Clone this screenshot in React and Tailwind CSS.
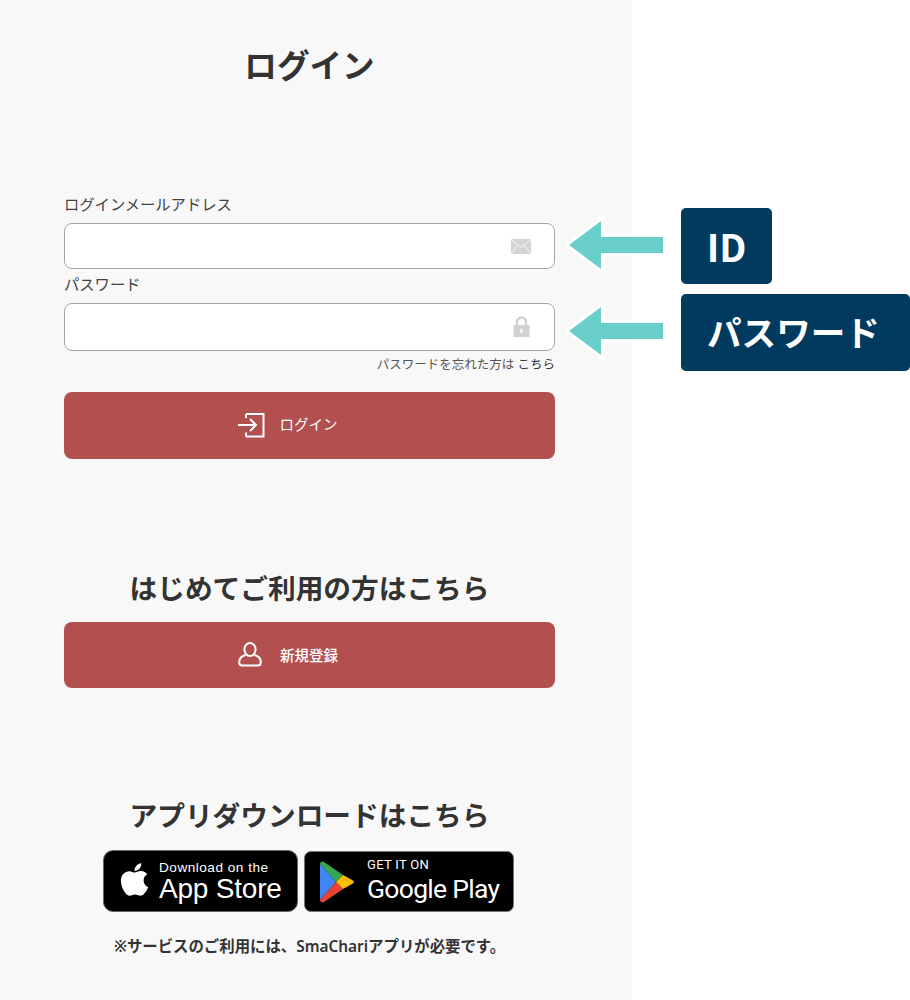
import React from "react";
import { FaApple } from "react-icons/fa";

const jp = "[font-family:'Noto_Sans','Noto_Sans_CJK_JP',sans-serif]";

function Arrow({ className }) {
  return (
    <svg className={className} width="104" height="58" viewBox="0 0 104 58">
      <path d="M5 29 L37 5 L37 21 L99 21 L99 37 L37 37 L37 53 Z" fill="#fff" stroke="#fff" strokeWidth="6" strokeLinejoin="miter" />
      <path d="M5 29 L37 5 L37 21 L99 21 L99 37 L37 37 L37 53 Z" fill="#69cfcb" />
    </svg>
  );
}

function MailIcon() {
  return (
    <svg width="20" height="15" viewBox="0 0 20 15" className="absolute right-[23px] top-[15px]">
      <rect width="20" height="15" fill="#d4d4d4" />
      <path d="M0 0.5 L10 8.5 L20 0.5 M0 14.5 L7 6.5 M20 14.5 L13 6.5" fill="none" stroke="#f4f4f4" strokeWidth="1" />
    </svg>
  );
}

function LockIcon() {
  return (
    <svg width="17" height="21" viewBox="0 0 17 21" className="absolute right-[24px] top-[12px]">
      <path d="M4 10 V6 a4.5 4.5 0 0 1 9 0 V10" fill="none" stroke="#d2d2d2" strokeWidth="2.4" />
      <rect x="0.5" y="9" width="16" height="12" fill="#d2d2d2" />
      <rect x="7.5" y="13" width="2" height="4" fill="#fff" />
    </svg>
  );
}

function LoginIcon() {
  return (
    <svg width="28" height="26" viewBox="0 0 28 26" fill="none" stroke="#fff" strokeWidth="2">
      <path d="M9 2 H26.5 V24.5 H9 M9 24.5 V20.5 M9 2 V6" />
      <path d="M1 13 H19 M13 7 L19 13 L13 19" />
    </svg>
  );
}

function UserIcon() {
  return (
    <svg width="24" height="25" viewBox="0 0 24 25" fill="none" stroke="#fff" strokeWidth="2">
      <ellipse cx="12" cy="7.5" rx="5.6" ry="6.5" />
      <path d="M7.5 13 C3.5 14 1.3 17 1.2 20 C1.2 22.5 2.2 23.5 4 23.5 H20 C21.8 23.5 22.8 22.5 22.8 20 C22.7 17 20.5 14 16.5 13" />
    </svg>
  );
}

function PlayIcon() {
  return (
    <svg width="36" height="42" viewBox="0 0 36 42">
      <path d="M1 3 C1 1 3 0 5 1 L24 14 L17 21 Z" fill="#34a853" />
      <path d="M1 3 L17 21 L1 39 Z" fill="#4285f4" />
      <path d="M1 39 L17 21 L24 28 L5 41 C3 42 1 41 1 39 Z" fill="#ea4335" />
      <path d="M24 14 L33 19 C35.5 20.5 35.5 21.5 33 23 L24 28 L17 21 Z" fill="#fbbc04" />
    </svg>
  );
}

function RedButton({ className, children }) {
  return (
    <div className={`flex items-center justify-center w-full rounded-[8px] bg-[#b25050] text-white ${className}`}>
      {children}
    </div>
  );
}

export default function App() {
  return (
    <div className={`relative w-[910px] h-[1000px] bg-white overflow-hidden text-[#333] ${jp}`}>
      <main className="w-[632px] h-[1000px] bg-[#f8f8f8] px-[64px] pr-[77px] flex flex-col">
        <h1 className="mt-[43px] h-[46px] leading-[46px] text-center text-[32.6px] font-bold">ログイン</h1>

        <label className="mt-[105px] h-[20px] leading-[20px] text-[15.3px] text-[#444]">ログインメールアドレス</label>
        <div className="relative mt-[9px] h-[46px] rounded-[8px] border border-[#a5a5a5] bg-white"><MailIcon /></div>
        <label className="mt-[5px] h-[20px] leading-[20px] text-[15.3px] text-[#444]">パスワード</label>
        <div className="relative mt-[9px] h-[48px] rounded-[8px] border border-[#a5a5a5] bg-white"><LockIcon /></div>
        <p className="mt-[5px] h-[18px] leading-[18px] text-right text-[12.5px] text-[#555]">パスワードを忘れた方は <span className="text-[#333]">こちら</span></p>

        <RedButton className="mt-[18px] h-[67px] gap-[15px] pr-[43px] pb-[2px]">
          <LoginIcon />
          <span className="text-[14.5px] w-[60px]">ログイン</span>
        </RedButton>

        <h2 className="mt-[107px] h-[44px] leading-[44px] text-center text-[27.7px] font-bold">はじめてご利用の方はこちら</h2>
        <RedButton className="mt-[12px] h-[66px] gap-[18px] pr-[41px] pb-[2px]">
          <UserIcon />
          <span className="text-[14.5px] font-medium w-[60px] mt-[4px]">新規登録</span>
        </RedButton>

        <h2 className="mt-[105px] h-[44px] leading-[44px] text-center text-[27.7px] font-bold">アプリダウンロードはこちら</h2>

        <div className="mt-[13px] ml-[39px] flex items-start gap-[6px]">
          <div className="relative w-[195px] h-[62px] rounded-[10px] bg-black border border-[#666] flex items-center pl-[12px] gap-[6px] text-white overflow-hidden font-['Liberation_Sans',sans-serif]">
            <FaApple className="text-[37px] mb-[3px] shrink-0" />
            <div className="flex flex-col">
              <span className="text-[13.6px] leading-[14px] tracking-[0.5px]">Download on the</span>
              <span className="text-[28px] leading-[27px] tracking-[-0.2px]">App Store</span>
            </div>
          </div>
          <div className="relative mt-[1px] w-[210px] h-[61px] rounded-[7px] bg-black border border-[#777] flex items-center pl-[14px] gap-[12px] text-white overflow-hidden font-['Roboto',sans-serif]">
            <PlayIcon />
            <div className="flex flex-col -mt-[1px]">
              <span className="text-[13px] leading-[14px] tracking-[0.3px]">GET IT ON</span>
              <span className="text-[26.5px] leading-[33px] tracking-[-0.7px]">Google Play</span>
            </div>
          </div>
        </div>

        <p className="mt-[23px] h-[24px] leading-[24px] text-center text-[15.4px] font-semibold whitespace-nowrap">※サービスのご利用には、SmaChariアプリが必要です。</p>
      </main>

      <Arrow className="absolute left-[564px] top-[216px]" />
      <Arrow className="absolute left-[564px] top-[302px]" />
      <div className="absolute left-[681px] top-[208px] w-[91px] h-[76px] rounded-[5px] bg-[#003a5f] text-white flex items-center justify-center pb-[2px] text-[38px] font-bold font-['Noto_Sans_CJK_JP',sans-serif]">ID</div>
      <div className="absolute left-[681px] top-[294px] w-[229px] h-[77px] rounded-[5px] bg-[#003a5f] text-white flex items-center justify-center pr-[4px] pb-[2px] text-[34.6px] font-bold font-['Noto_Sans_CJK_JP',sans-serif]">パスワード</div>
    </div>
  );
}
